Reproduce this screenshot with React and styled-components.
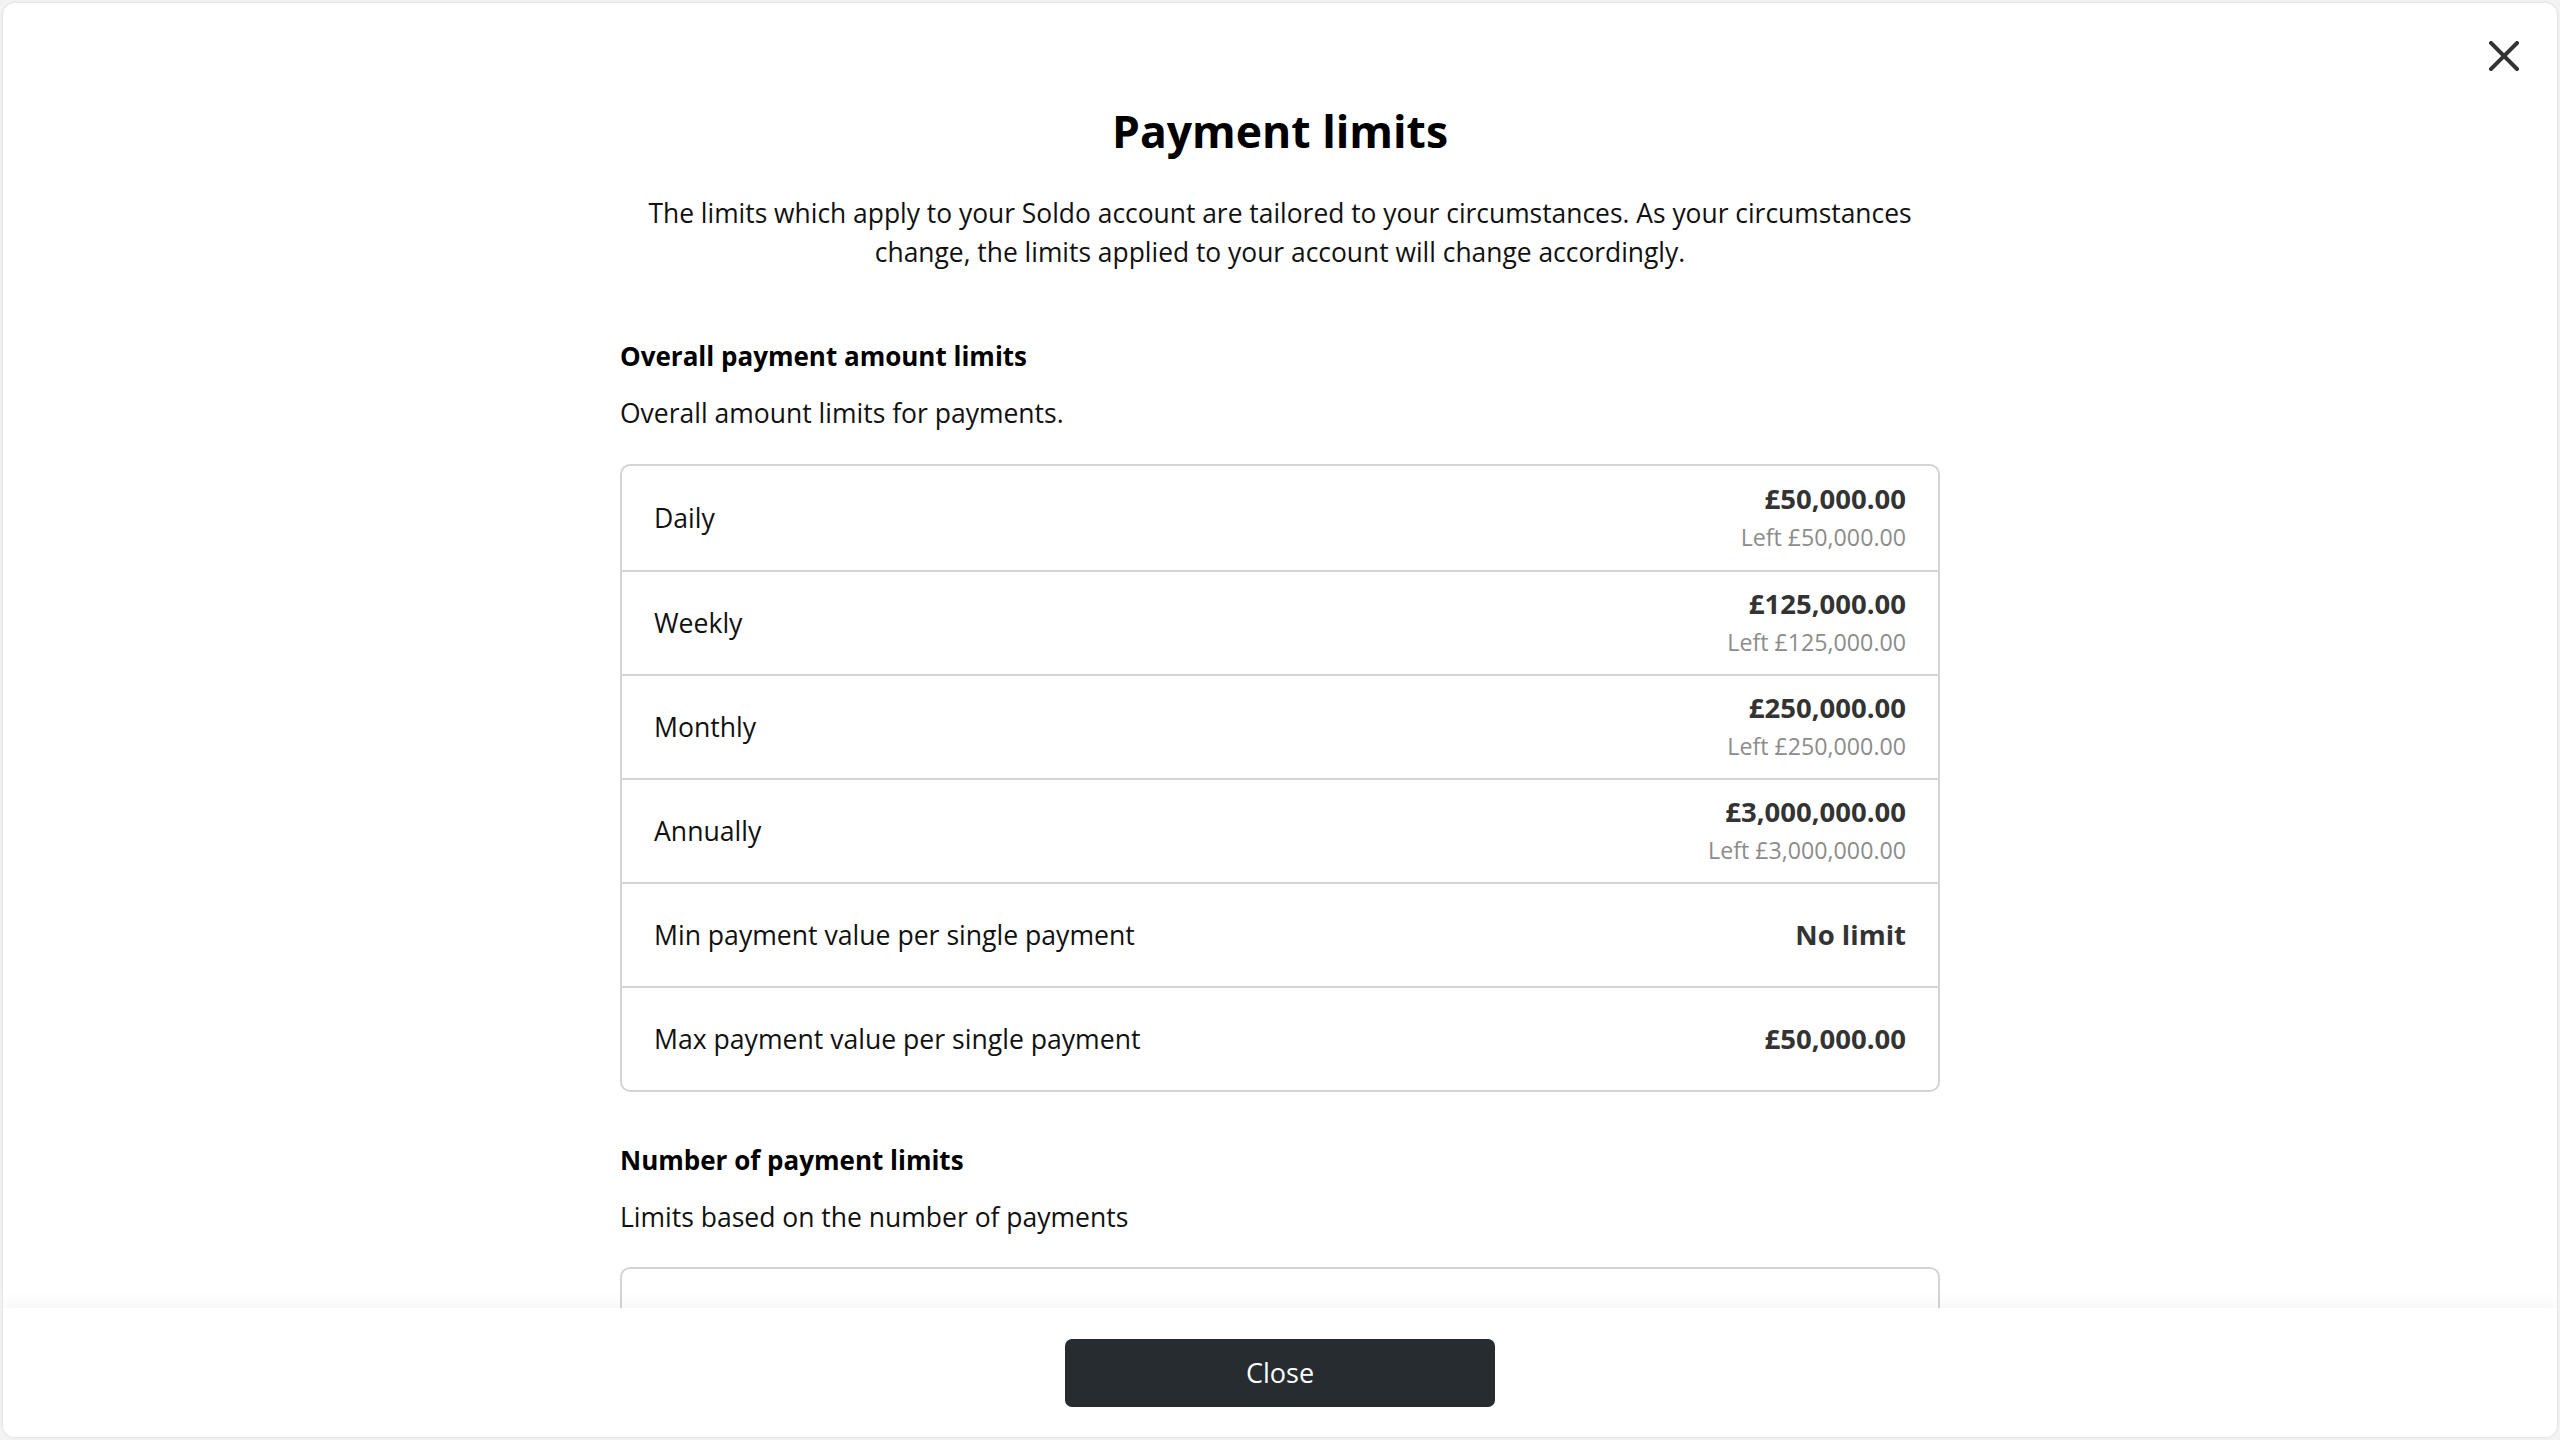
import React from "react";
import styled, { createGlobalStyle } from "styled-components";

const Global = createGlobalStyle`
  html, body { margin: 0; padding: 0; height: 100%; background: #f3f3f3; }
  #root { height: 100%; }
  * { box-sizing: border-box; }
  body { font-family: "Segoe UI", "Open Sans", "Noto Sans", sans-serif; color: #111; }
`;

const Page = styled.div`
  height: 100vh;
  padding: 3px;
  display: flex;
`;

const Modal = styled.div`
  position: relative;
  flex: 1;
  display: flex;
  flex-direction: column;
  background: #fff;
  border-radius: 12px;
  box-shadow: 0 0 3px rgba(0, 0, 0, 0.14);
  overflow: hidden;
`;

const CloseIcon = styled.button`
  position: absolute;
  top: 29px;
  right: 29px;
  width: 48px;
  height: 48px;
  border: 0;
  background: transparent;
  display: flex;
  align-items: center;
  justify-content: center;
  padding: 0;
  cursor: pointer;
`;

const Body = styled.div`
  flex: 1;
  overflow-y: auto;
  scrollbar-width: none;
  padding-top: 95.5px;
`;

const Column = styled.div`
  width: 1320px;
  margin: 0 auto;
`;

const Title = styled.h1`
  margin: 0;
  font-size: 44.5px;
  line-height: 64px;
  font-weight: 700;
  text-align: center;
  color: #000;
`;

const Lead = styled.p`
  margin: 31.5px 0 0;
  font-size: 26.4px;
  line-height: 39px;
  text-align: center;
  color: #111;
`;

const Section = styled.section`
  margin-top: ${(p) => p.$top}px;
`;

const SectionTitle = styled.h2`
  margin: 0;
  font-size: 26px;
  line-height: 39px;
  font-weight: 700;
  color: #000;
`;

const SectionText = styled.p`
  margin: 18px 0 0;
  font-size: 26.5px;
  line-height: 39px;
  color: #111;
`;

const Table = styled.div`
  margin-top: 30.5px;
  border: 2px solid #d4d4d4;
  border-radius: 10px;
  overflow: hidden;
`;

const Row = styled.div`
  display: flex;
  align-items: center;
  justify-content: space-between;
  height: 104px;
  padding: 0 32px 0 32px;
  & + & { border-top: 2px solid #d4d4d4; }
`;

const Label = styled.span`
  font-size: 26.6px;
  line-height: 38px;
  color: #111;
`;

const Values = styled.div`
  display: flex;
  flex-direction: column;
  align-items: flex-end;
`;

const Amount = styled.span`
  font-size: 27.5px;
  line-height: 38px;
  font-weight: 700;
  color: #333;
`;

const Remaining = styled.span`
  font-size: 23.2px;
  line-height: 38px;
  color: #8c8c8c;
`;

const Footer = styled.div`
  flex: 0 0 129px;
  display: flex;
  align-items: center;
  justify-content: center;
  background: #fff;
  box-shadow: 0 -6px 14px rgba(0, 0, 0, 0.04);
  position: relative;
  z-index: 1;
`;

const PrimaryButton = styled.button`
  width: 430px;
  height: 68px;
  border: 0;
  border-radius: 7px;
  background: #262c2f;
  color: #fff;
  font-family: inherit;
  font-size: 27px;
  cursor: pointer;
`;

const amountRows = [
  { label: "Daily", amount: "£50,000.00", left: "Left £50,000.00" },
  { label: "Weekly", amount: "£125,000.00", left: "Left £125,000.00" },
  { label: "Monthly", amount: "£250,000.00", left: "Left £250,000.00" },
  { label: "Annually", amount: "£3,000,000.00", left: "Left £3,000,000.00" },
  { label: "Min payment value per single payment", amount: "No limit" },
  { label: "Max payment value per single payment", amount: "£50,000.00" },
];

const countRows = [
  { label: "Max number of payments per day", amount: "No limit" },
  { label: "Max number of payments per month", amount: "No limit" },
];

function LimitTable({ rows }) {
  return (
    <Table>
      {rows.map((r) => (
        <Row key={r.label}>
          <Label>{r.label}</Label>
          <Values>
            <Amount>{r.amount}</Amount>
            {r.left && <Remaining>{r.left}</Remaining>}
          </Values>
        </Row>
      ))}
    </Table>
  );
}

export default function App() {
  return (
    <>
      <Global />
      <Page>
        <Modal>
          <CloseIcon aria-label="Close">
            <svg width="30" height="30" viewBox="0 0 30 30">
              <path d="M2 2L28 28M28 2L2 28" stroke="#333" strokeWidth="4" strokeLinecap="square" />
            </svg>
          </CloseIcon>
          <Body>
            <Column>
              <Title>Payment limits</Title>
              <Lead>
                The limits which apply to your Soldo account are tailored to your circumstances. As your circumstances change, the limits applied to your account will change accordingly.
              </Lead>
              <Section $top={65}>
                <SectionTitle>Overall payment amount limits</SectionTitle>
                <SectionText>Overall amount limits for payments.</SectionText>
                <LimitTable rows={amountRows} />
              </Section>
              <Section $top={49}>
                <SectionTitle>Number of payment limits</SectionTitle>
                <SectionText>Limits based on the number of payments</SectionText>
                <LimitTable rows={countRows} />
              </Section>
            </Column>
          </Body>
          <Footer>
            <PrimaryButton>Close</PrimaryButton>
          </Footer>
        </Modal>
      </Page>
    </>
  );
}
